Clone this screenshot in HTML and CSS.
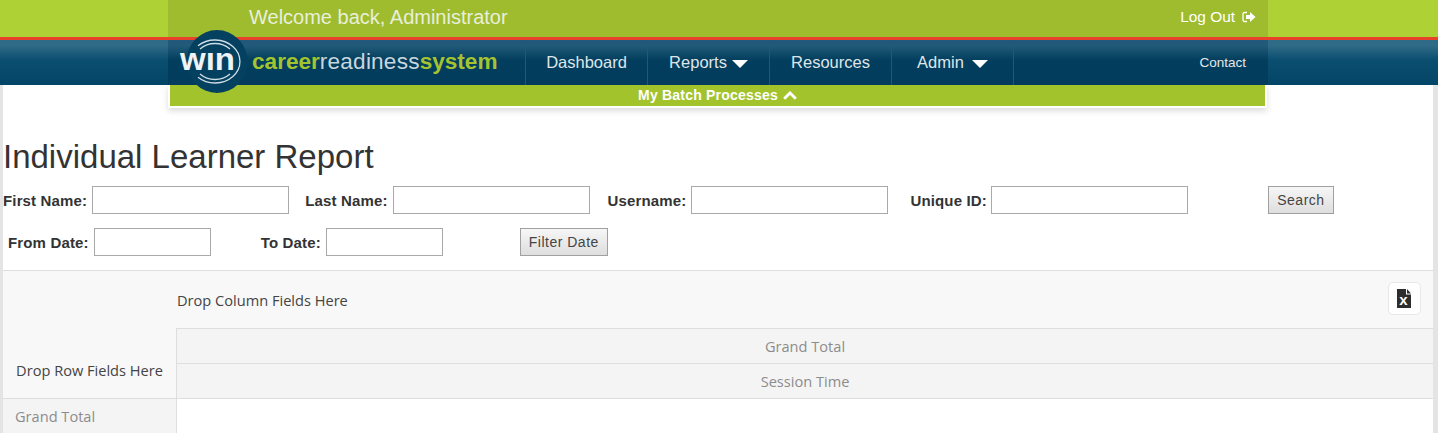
FILE: index.html
```html
<!DOCTYPE html>
<html lang="en">
<head>
<meta charset="utf-8">
<title>Individual Learner Report</title>
<link rel="stylesheet" href="styles.css">
</head>
<body>
<header class="site-header">
  <div class="topbar">
    <div class="topbar-inner">
      <span class="welcome">Welcome back, Administrator</span>
      <a class="logout">Log Out
        <svg class="logout-icon" viewBox="0 0 14 12" width="14" height="12"><path d="M5 1.500H2.500A1.500 1.500 0 0 0 1 3v6a1.500 1.500 0 0 0 1.500 1.500H5" fill="none" stroke="#fff" stroke-width="1.300"/><path d="M8 1l5.500 5L8 11V8H4V4h4z" fill="#fff"/></svg>
      </a>
    </div>
  </div>
  <div class="navbar">
    <div class="navbar-inner">
      <div class="brand">
        <svg class="brand-mark" viewBox="0 0 66 66" width="66" height="66">
          <ellipse cx="33" cy="32.500" rx="30.500" ry="31.500" fill="#04405f"/>
          <path d="M14 16.700A25 21.500 0 1 1 14 48.300" fill="none" stroke="#cfdde5" stroke-width="1.300"/>
          <path d="M16 19.900A21 18 0 0 1 46 19.900M46 45.100A21 18 0 0 1 16 45.100" fill="none" stroke="#cfdde5" stroke-width="1.300"/>
          <text x="-4" y="41" textLength="55" lengthAdjust="spacingAndGlyphs" class="brand-win">wın</text>
        </svg>
        <span class="brand-name"><b>career</b><span class="brand-mid">readiness</span><b>system</b></span>
      </div>
      <nav class="nav">
        <a class="nav-item nav-dash">Dashboard</a>
        <a class="nav-item nav-reports">Reports <span class="caret"></span></a>
        <a class="nav-item nav-res">Resources</a>
        <a class="nav-item nav-admin">Admin <span class="caret"></span></a>
      </nav>
      <a class="contact">Contact</a>
    </div>
  </div>
</header>
<main class="page">
  <div class="batch-tab">My Batch Processes
    <svg class="chevron" viewBox="0 0 14 9" width="14" height="9"><path d="M1.200 7.800L7 2l5.800 5.800" fill="none" stroke="#fff" stroke-width="2.800"/></svg>
  </div>
  <h1 class="title">Individual Learner Report</h1>
  <form class="filters">
    <div class="filter-row row-one">
      <label class="field f-first">First Name:<input class="text-input wide" type="text"></label>
      <label class="field f-last">Last Name:<input class="text-input wide" type="text"></label>
      <label class="field f-user">Username:<input class="text-input wide" type="text"></label>
      <label class="field f-uid">Unique ID:<input class="text-input wide" type="text"></label>
      <button class="btn btn-search" type="button">Search</button>
    </div>
    <div class="filter-row row-two">
      <label class="field f-from">From Date:<input class="text-input narrow" type="text"></label>
      <label class="field f-to">To Date:<input class="text-input narrow" type="text"></label>
      <button class="btn btn-filter" type="button">Filter Date</button>
    </div>
  </form>
  <section class="pivot">
    <div class="cell row-fields">Drop Row Fields Here</div>
    <div class="cell col-fields">
      <span>Drop Column Fields Here</span>
      <button class="export" type="button" aria-label="Export to Excel">
        <svg viewBox="0 0 14 19" width="14" height="19"><path d="M0 0h9v5.500h5V19H0z" fill="#2d2d2d"/><path d="M10 0l4 4.500h-4z" fill="#2d2d2d"/><text x="6.500" y="15.500" text-anchor="middle" class="export-x">x</text></svg>
      </button>
    </div>
    <div class="cell head head-total">Grand Total</div>
    <div class="cell head head-session">Session Time</div>
    <div class="cell row-label">Grand Total</div>
    <div class="cell data"></div>
  </section>
</main>
</body>
</html>
```
FILE: styles.css
```css
* { box-sizing: border-box; }
html, body { margin: 0; height: 433px; overflow: hidden; }
body { background: #e4e4e4; font-family: "Liberation Sans", Arial, sans-serif; color: #333; }

.site-header { position: relative; z-index: 2; }
.topbar { height: 37px; background: #aed136; padding: 0 170px 0 168px; }
.topbar-inner { height: 37px; background: #9fbc2e; display: flex; align-items: center; justify-content: space-between; padding: 0 12px 3px 81px; }
.welcome { font-size: 20px; color: #e9efdc; }
.logout { font-size: 15.400px; color: #fff; display: flex; align-items: center; gap: 7px; }
.logout-icon { display: block; }

.navbar { height: 48px; border-top: 3px solid #e8432a; background: linear-gradient(#2f6a86 0, #2f6a86 6px, #0a4e70 20px, #034566 100%); padding: 0 170px 0 168px; }
.navbar-inner { height: 45px; background: linear-gradient(#23587a 0, #215a78 6px, #033e5e 20px, #033c5c 100%); display: flex; align-items: stretch; position: relative; }
.brand { position: absolute; left: 16px; top: -11px; display: flex; align-items: center; gap: 2px; height: 66px; }
.brand-mark { display: block; overflow: visible; }
.brand-win { font: bold 32px "Liberation Sans", sans-serif; fill: #eef3f5; }
.brand-name { font-size: 22.600px; color: #c8d6dd; }
.brand-mid { letter-spacing: 0.2px; }
.brand-name b { color: #a3c42f; }

.nav { display: flex; margin-left: 357px; border-left: 1px solid #1e5a78; }
.nav-item { display: flex; align-items: center; justify-content: center; font-size: 16.500px; color: #dfe6ea; border-right: 1px solid #1e5a78; gap: 5px; }
.nav-dash { width: 122px; }
.nav-reports { width: 122px; }
.nav-res { width: 122px; }
.nav-admin { width: 122px; gap: 8px; }
.caret { width: 0; height: 0; border-left: 8px solid transparent; border-right: 8px solid transparent; border-top: 8px solid #fff; margin-top: 3px; }
.contact { margin-left: auto; align-self: center; font-size: 13.500px; color: #e3e9ec; margin-right: 22px; }

.page { background: #fff; margin: 0 5px 0 3px; height: 348px; }
.batch-tab { margin: 0 166px 0 165px; height: 23px; background: #a3c32c; border: solid #fff; border-width: 0 2px 2px 2px; box-shadow: 0 3px 6px rgba(0,0,0,.14); color: #fff; font-weight: bold; font-size: 14px; display: flex; align-items: center; justify-content: center; gap: 5px; letter-spacing: 0.2px; padding-bottom: 1px; }
.chevron { display: block; }

.title { margin: 30px 0 0; font-size: 33px; font-weight: normal; line-height: 37px; color: #333; }
.filters { margin-top: 11px; }
.filter-row { display: flex; align-items: center; height: 28px; }
.row-two { margin-top: 14px; padding-left: 5px; }
.field { display: flex; align-items: center; gap: 5px; font-size: 15px; font-weight: bold; letter-spacing: 0.15px; }
.text-input { height: 28px; border: 1px solid #a9a9a9; background: #fff; padding: 0; }
.wide { width: 197px; }
.narrow { width: 117px; }
.f-last { margin-left: 16px; }
.f-user { margin-left: 18px; }
.f-uid { margin-left: 22px; gap: 4px; }
.f-to { margin-left: 50px; }
.btn { height: 28px; border: 1px solid #a0a0a0; background: linear-gradient(#f6f6f6, #dedede); font: 14px "Liberation Sans", sans-serif; color: #444; padding: 0; letter-spacing: 0.5px; }
.btn-search { width: 66px; margin-left: 80px; }
.btn-filter { width: 88px; margin-left: 77px; }

.pivot { margin-top: 14px; display: grid; grid-template-columns: 173px 1fr; grid-template-rows: 57px 35px 35px 36px; border-top: 1px solid #dedede; font: 14.600px "Open Sans", sans-serif; background: #f8f8f8; }
.cell { display: flex; align-items: center; }
.row-fields { grid-column: 1; grid-row: 1 / span 3; align-items: flex-end; justify-content: center; padding-bottom: 18px; color: #444; }
.col-fields { grid-column: 2; grid-row: 1; justify-content: space-between; color: #444; padding: 0 12px 0 1px; }
.export { width: 33px; height: 33px; margin-bottom: 3px; border: 1px solid #e8e8e8; border-radius: 5px; background: #fff; display: flex; align-items: center; justify-content: center; padding: 0 1px 0 0; }
.export svg { display: block; }
.export-x { font: bold 15px "Liberation Sans", sans-serif; fill: #fff; }
.head { grid-column: 2; justify-content: center; color: #8c8c8c; background: #f4f4f4; border-left: 1px solid #dedede; border-top: 1px solid #dedede; }
.row-label { grid-column: 1; background: #f4f4f4; color: #8c8c8c; padding: 0 0 1px 12px; border-top: 1px solid #dedede; }
.data { grid-column: 2; background: #fff; border-left: 1px solid #dedede; border-top: 1px solid #dedede; }
```
